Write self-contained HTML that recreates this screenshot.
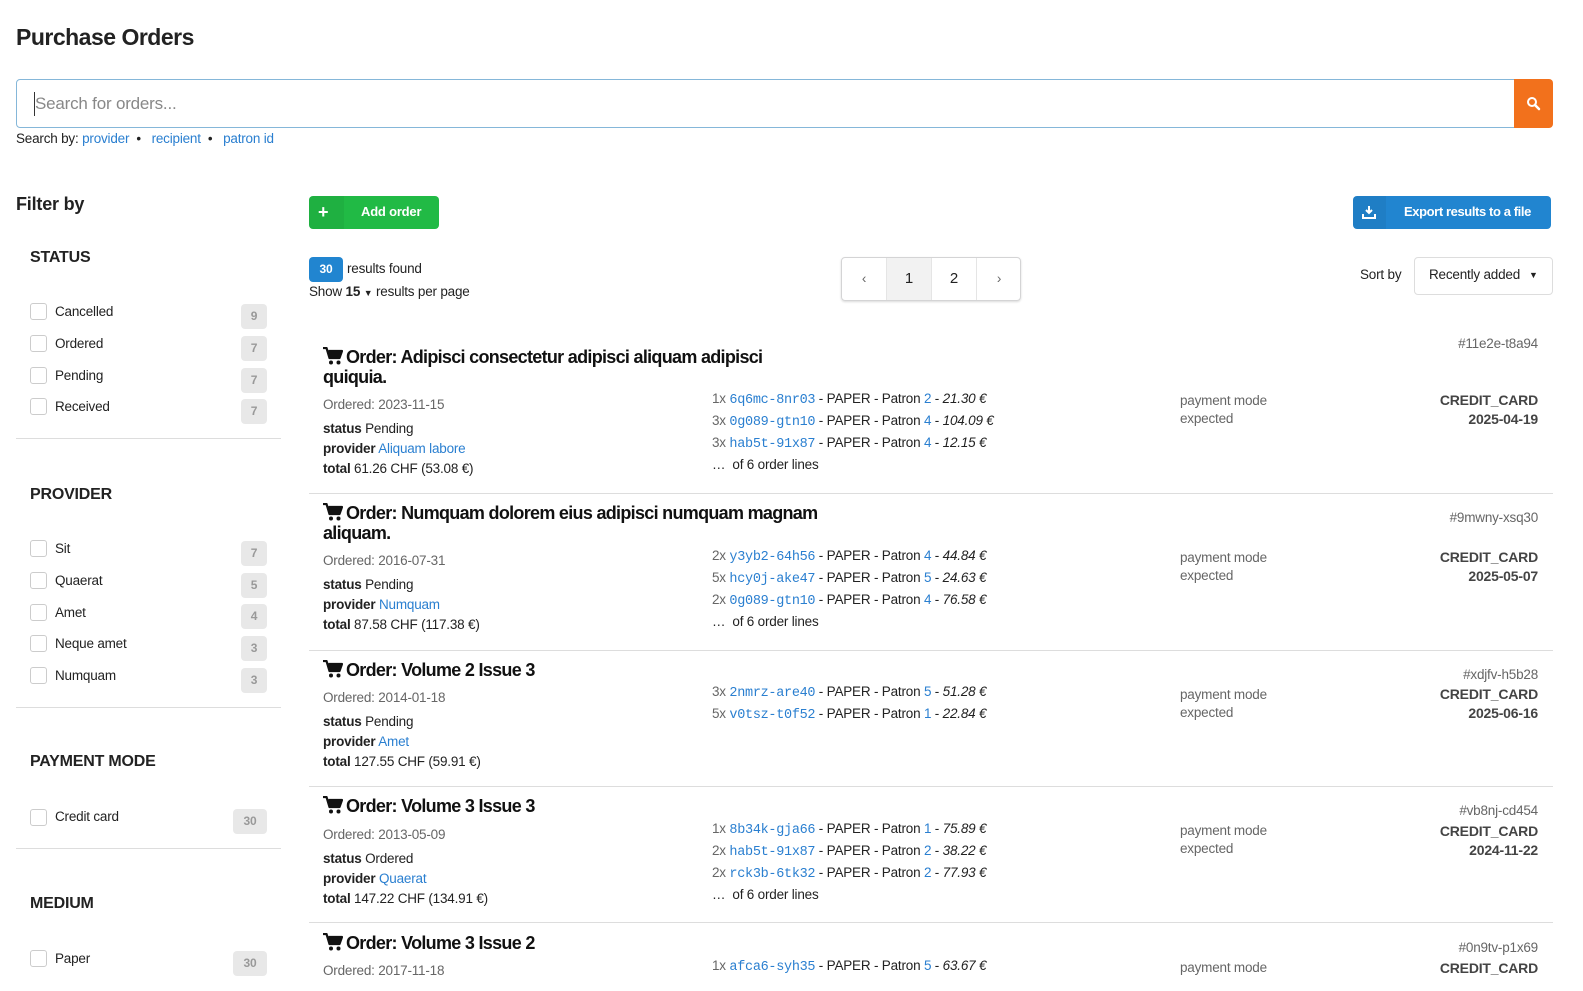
<!DOCTYPE html>
<html><head><meta charset="utf-8"><style>
*{box-sizing:border-box;margin:0;padding:0}
body{width:1583px;height:991px;overflow:hidden;background:#fff;font-family:"Liberation Sans",sans-serif;color:#222;font-size:13.5px;letter-spacing:-0.2px;position:relative}
.a{position:absolute;white-space:nowrap;line-height:20px}
.l{color:#2a7fd0}
.g{color:#666}
.m{font-family:"Liberation Mono",monospace;color:#2a7fd0;font-size:13.5px;letter-spacing:-0.3px}
.i{font-style:italic}
b{font-weight:bold}
.cb{position:absolute;left:30px;width:17px;height:17px;border:1px solid #ccc;border-radius:3px;background:#fff}
.bd{position:absolute;left:241px;width:26px;height:25px;background:#e8e8e8;border-radius:4px;color:#999;font-size:12px;text-align:center;line-height:25px;font-weight:bold}
.hr{position:absolute;height:1px;background:#ddd}
.h3{position:absolute;font-weight:bold;font-size:16px;left:30px;line-height:20px}
.tt{position:absolute;left:323px;font-weight:bold;font-size:18px;letter-spacing:-0.7px;line-height:20px;color:#111;width:500px}
.tt svg{vertical-align:-2px;margin-right:3px}
.r{position:absolute;right:45px;text-align:right;line-height:19px;white-space:nowrap}
</style></head><body>
<svg width="0" height="0" style="position:absolute"><defs><symbol id="cart" viewBox="0 0 20 18"><path d="M0 1h3.5l3 10h10l2.5-7H5.5" fill="none" stroke="#111" stroke-width="2.2" stroke-linejoin="round"/><path d="M5 4h14l-2.7 7.5H7.2z" fill="#111"/><circle cx="8" cy="15.5" r="2" fill="#111"/><circle cx="15.5" cy="15.5" r="2" fill="#111"/></symbol></defs></svg>
<div class="a" style="left:16px;top:22px;font-size:23px;font-weight:bold;line-height:30px;letter-spacing:-0.5px">Purchase Orders</div>
<div style="position:absolute;left:16px;top:79px;width:1499px;height:49px;border:1px solid #85b7d9;border-radius:4px 0 0 4px"></div>
<div style="position:absolute;left:34px;top:92px;width:1px;height:24px;background:#333"></div>
<div class="a" style="left:35px;top:93px;font-size:17px;color:#888;line-height:22px">Search for orders...</div>
<div style="position:absolute;left:1514px;top:79px;width:39px;height:49px;background:#f2711c;border-radius:0 4px 4px 0"></div>
<svg style="position:absolute;left:1526px;top:96px" width="15" height="15" viewBox="0 0 15 15"><circle cx="6" cy="6" r="4" fill="none" stroke="#fff" stroke-width="2"/><path d="M9 9l4 4" stroke="#fff" stroke-width="2.5" stroke-linecap="round"/></svg>
<div class="a" style="left:16px;top:129px">Search by: <span class="l">provider</span> &nbsp;•&nbsp;&nbsp; <span class="l">recipient</span> &nbsp;•&nbsp;&nbsp; <span class="l">patron id</span></div>

<div class="a" style="left:16px;top:193px;font-size:18px;font-weight:bold;line-height:22px">Filter by</div>
<div class="h3" style="top:248px">STATUS</div>
<div class="cb" style="top:303px"></div><div class="a" style="left:55px;top:302px">Cancelled</div><div class="bd" style="top:304px">9</div>
<div class="cb" style="top:335px"></div><div class="a" style="left:55px;top:334px">Ordered</div><div class="bd" style="top:336px">7</div>
<div class="cb" style="top:367px"></div><div class="a" style="left:55px;top:366px">Pending</div><div class="bd" style="top:368px">7</div>
<div class="cb" style="top:398px"></div><div class="a" style="left:55px;top:397px">Received</div><div class="bd" style="top:399px">7</div>
<div class="hr" style="left:16px;top:438px;width:265px"></div>
<div class="h3" style="top:485px">PROVIDER</div>
<div class="cb" style="top:540px"></div><div class="a" style="left:55px;top:539px">Sit</div><div class="bd" style="top:541px">7</div>
<div class="cb" style="top:572px"></div><div class="a" style="left:55px;top:571px">Quaerat</div><div class="bd" style="top:573px">5</div>
<div class="cb" style="top:604px"></div><div class="a" style="left:55px;top:603px">Amet</div><div class="bd" style="top:604px">4</div>
<div class="cb" style="top:635px"></div><div class="a" style="left:55px;top:634px">Neque amet</div><div class="bd" style="top:636px">3</div>
<div class="cb" style="top:667px"></div><div class="a" style="left:55px;top:666px">Numquam</div><div class="bd" style="top:668px">3</div>
<div class="hr" style="left:16px;top:707px;width:265px"></div>
<div class="h3" style="top:752px">PAYMENT MODE</div>
<div class="cb" style="top:809px"></div><div class="a" style="left:55px;top:807px">Credit card</div><div class="bd" style="left:233px;width:34px;top:809px">30</div>
<div class="hr" style="left:16px;top:848px;width:265px"></div>
<div class="h3" style="top:894px">MEDIUM</div>
<div class="cb" style="top:950px"></div><div class="a" style="left:55px;top:949px">Paper</div><div class="bd" style="left:233px;width:34px;top:951px">30</div>

<div style="position:absolute;left:309px;top:196px;width:130px;height:33px;background:#21ba45;border-radius:4px"></div>
<div style="position:absolute;left:309px;top:196px;width:35px;height:33px;background:rgba(0,0,0,0.05);border-radius:4px 0 0 4px"></div>
<div class="a" style="left:318px;top:202px;color:#fff;font-weight:bold;font-size:18px">+</div>
<div class="a" style="left:361px;top:202px;color:#fff;font-weight:bold;font-size:13px">Add order</div>
<div style="position:absolute;left:1353px;top:196px;width:198px;height:33px;background:#2185d0;border-radius:4px"></div>
<div style="position:absolute;left:1353px;top:196px;width:33px;height:33px;background:rgba(0,0,0,0.05);border-radius:4px 0 0 4px"></div>
<svg style="position:absolute;left:1362px;top:205px" width="14" height="14" viewBox="0 0 14 14"><path d="M7 1v7M4 5l3 3 3-3" stroke="#fff" stroke-width="2" fill="none"/><path d="M1 9v4h12V9" stroke="#fff" stroke-width="2" fill="none"/></svg>
<div class="a" style="left:1404px;top:202px;color:#fff;font-weight:bold;font-size:13px;letter-spacing:-0.4px">Export results to a file</div>

<div style="position:absolute;left:309px;top:257px;width:34px;height:25px;background:#2185d0;border-radius:4px;color:#fff;font-weight:bold;font-size:12px;text-align:center;line-height:25px">30</div>
<div class="a" style="left:347px;top:259px">results found</div>
<div class="a" style="left:309px;top:282px">Show <b>15</b> <span style="font-size:9px">▼</span> results per page</div>

<div style="position:absolute;left:841px;top:257px;width:180px;height:44px;border:1px solid #d4d4d5;border-radius:4px;box-shadow:0 1px 2px rgba(0,0,0,.15);overflow:hidden">
<div style="position:absolute;left:0;top:0;width:44px;height:42px;text-align:center;line-height:42px;color:#666">‹</div>
<div style="position:absolute;left:44px;top:0;width:45px;height:42px;background:#f2f2f2;border-left:1px solid #e5e5e5;text-align:center;line-height:42px;font-size:15px">1</div>
<div style="position:absolute;left:89px;top:0;width:45px;height:42px;border-left:1px solid #e5e5e5;text-align:center;line-height:42px;font-size:15px">2</div>
<div style="position:absolute;left:134px;top:0;width:45px;height:42px;border-left:1px solid #e5e5e5;text-align:center;line-height:42px;color:#666">›</div>
</div>
<div class="a" style="left:1360px;top:265px">Sort by</div>
<div style="position:absolute;left:1414px;top:257px;width:139px;height:38px;border:1px solid #ddd;border-radius:4px"></div>
<div class="a" style="left:1429px;top:265px">Recently added</div>
<div class="a" style="left:1529px;top:265px;font-size:9px">▼</div>

<!-- order 1 -->
<div class="tt" style="top:347px;width:470px"><svg width="20" height="18"><use href="#cart"/></svg>Order: Adipisci consectetur adipisci aliquam adipisci quiquia.</div>
<div class="a g" style="left:323px;top:395px">Ordered: 2023-11-15</div>
<div class="a" style="left:323px;top:419px"><b>status</b> Pending</div>
<div class="a" style="left:323px;top:439px"><b>provider</b> <span class="l">Aliquam labore</span></div>
<div class="a" style="left:323px;top:459px"><b>total</b> 61.26 CHF (53.08 €)</div>
<div class="a" style="left:712px;top:389px"><span class="g">1x</span> <span class="m">6q6mc-8nr03</span> - PAPER - Patron <span class="l">2</span> - <span class="i">21.30 €</span></div>
<div class="a" style="left:712px;top:411px"><span class="g">3x</span> <span class="m">0g089-gtn10</span> - PAPER - Patron <span class="l">4</span> - <span class="i">104.09 €</span></div>
<div class="a" style="left:712px;top:433px"><span class="g">3x</span> <span class="m">hab5t-91x87</span> - PAPER - Patron <span class="l">4</span> - <span class="i">12.15 €</span></div>
<div class="a" style="left:712px;top:455px">… &nbsp;of 6 order lines</div>
<div class="a g" style="left:1180px;top:392px;line-height:18px">payment mode<br>expected</div>
<div class="r g" style="top:334px">#11e2e-t8a94</div>
<div class="r" style="top:391px;font-weight:bold;color:#444;font-size:14px">CREDIT_CARD<br>2025-04-19</div>
<div class="hr" style="left:309px;top:493px;width:1244px"></div>
<!-- order 2 -->
<div class="tt" style="top:503px"><svg width="20" height="18"><use href="#cart"/></svg>Order: Numquam dolorem eius adipisci numquam magnam aliquam.</div>
<div class="a g" style="left:323px;top:551px">Ordered: 2016-07-31</div>
<div class="a" style="left:323px;top:575px"><b>status</b> Pending</div>
<div class="a" style="left:323px;top:595px"><b>provider</b> <span class="l">Numquam</span></div>
<div class="a" style="left:323px;top:615px"><b>total</b> 87.58 CHF (117.38 €)</div>
<div class="a" style="left:712px;top:546px"><span class="g">2x</span> <span class="m">y3yb2-64h56</span> - PAPER - Patron <span class="l">4</span> - <span class="i">44.84 €</span></div>
<div class="a" style="left:712px;top:568px"><span class="g">5x</span> <span class="m">hcy0j-ake47</span> - PAPER - Patron <span class="l">5</span> - <span class="i">24.63 €</span></div>
<div class="a" style="left:712px;top:590px"><span class="g">2x</span> <span class="m">0g089-gtn10</span> - PAPER - Patron <span class="l">4</span> - <span class="i">76.58 €</span></div>
<div class="a" style="left:712px;top:612px">… &nbsp;of 6 order lines</div>
<div class="a g" style="left:1180px;top:549px;line-height:18px">payment mode<br>expected</div>
<div class="r g" style="top:508px">#9mwny-xsq30</div>
<div class="r" style="top:548px;font-weight:bold;color:#444;font-size:14px">CREDIT_CARD<br>2025-05-07</div>
<div class="hr" style="left:309px;top:650px;width:1244px"></div>
<!-- order 3 -->
<div class="tt" style="top:660px"><svg width="20" height="18"><use href="#cart"/></svg>Order: Volume 2 Issue 3</div>
<div class="a g" style="left:323px;top:688px">Ordered: 2014-01-18</div>
<div class="a" style="left:323px;top:712px"><b>status</b> Pending</div>
<div class="a" style="left:323px;top:732px"><b>provider</b> <span class="l">Amet</span></div>
<div class="a" style="left:323px;top:752px"><b>total</b> 127.55 CHF (59.91 €)</div>
<div class="a" style="left:712px;top:682px"><span class="g">3x</span> <span class="m">2nmrz-are40</span> - PAPER - Patron <span class="l">5</span> - <span class="i">51.28 €</span></div>
<div class="a" style="left:712px;top:704px"><span class="g">5x</span> <span class="m">v0tsz-t0f52</span> - PAPER - Patron <span class="l">1</span> - <span class="i">22.84 €</span></div>
<div class="a g" style="left:1180px;top:686px;line-height:18px">payment mode<br>expected</div>
<div class="r g" style="top:665px">#xdjfv-h5b28</div>
<div class="r" style="top:685px;font-weight:bold;color:#444;font-size:14px">CREDIT_CARD<br>2025-06-16</div>
<div class="hr" style="left:309px;top:786px;width:1244px"></div>
<!-- order 4 -->
<div class="tt" style="top:796px"><svg width="20" height="18"><use href="#cart"/></svg>Order: Volume 3 Issue 3</div>
<div class="a g" style="left:323px;top:825px">Ordered: 2013-05-09</div>
<div class="a" style="left:323px;top:849px"><b>status</b> Ordered</div>
<div class="a" style="left:323px;top:869px"><b>provider</b> <span class="l">Quaerat</span></div>
<div class="a" style="left:323px;top:889px"><b>total</b> 147.22 CHF (134.91 €)</div>
<div class="a" style="left:712px;top:819px"><span class="g">1x</span> <span class="m">8b34k-gja66</span> - PAPER - Patron <span class="l">1</span> - <span class="i">75.89 €</span></div>
<div class="a" style="left:712px;top:841px"><span class="g">2x</span> <span class="m">hab5t-91x87</span> - PAPER - Patron <span class="l">2</span> - <span class="i">38.22 €</span></div>
<div class="a" style="left:712px;top:863px"><span class="g">2x</span> <span class="m">rck3b-6tk32</span> - PAPER - Patron <span class="l">2</span> - <span class="i">77.93 €</span></div>
<div class="a" style="left:712px;top:885px">… &nbsp;of 6 order lines</div>
<div class="a g" style="left:1180px;top:822px;line-height:18px">payment mode<br>expected</div>
<div class="r g" style="top:801px">#vb8nj-cd454</div>
<div class="r" style="top:822px;font-weight:bold;color:#444;font-size:14px">CREDIT_CARD<br>2024-11-22</div>
<div class="hr" style="left:309px;top:922px;width:1244px"></div>
<!-- order 5 -->
<div class="tt" style="top:933px"><svg width="20" height="18"><use href="#cart"/></svg>Order: Volume 3 Issue 2</div>
<div class="a g" style="left:323px;top:961px">Ordered: 2017-11-18</div>
<div class="a" style="left:712px;top:956px"><span class="g">1x</span> <span class="m">afca6-syh35</span> - PAPER - Patron <span class="l">5</span> - <span class="i">63.67 €</span></div>
<div class="a g" style="left:1180px;top:959px;line-height:18px">payment mode</div>
<div class="r g" style="top:938px">#0n9tv-p1x69</div>
<div class="r" style="top:959px;font-weight:bold;color:#444;font-size:14px">CREDIT_CARD</div>
</body></html>
